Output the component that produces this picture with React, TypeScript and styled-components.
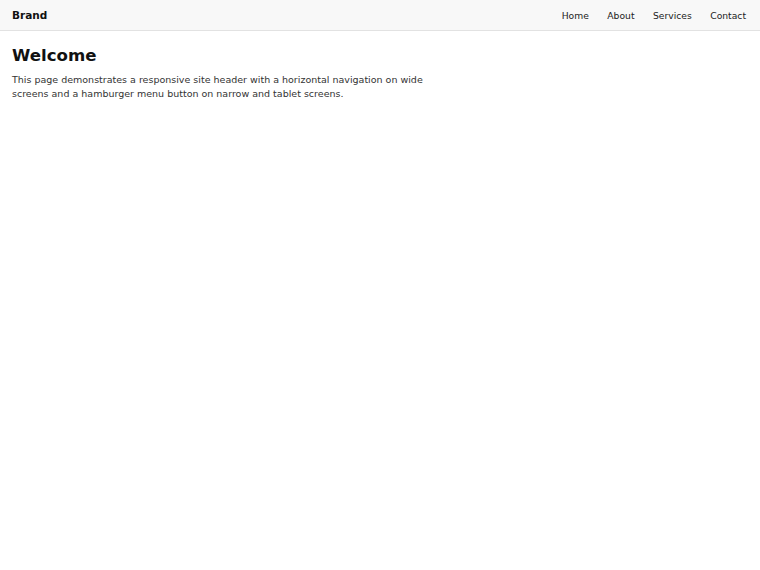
import React from "react";
import styled, { createGlobalStyle } from "styled-components";

const GlobalStyle = createGlobalStyle`
  html, body {
    margin: 0;
    padding: 0;
    background: #ffffff;
    font-family: "DejaVu Sans", sans-serif;
    color: #222222;
  }
`;

const Header = styled.header`
  display: flex;
  align-items: center;
  justify-content: space-between;
  height: 30px;
  padding: 0 14px 0 12px;
  background: #f8f8f8;
  border-bottom: 1px solid #e2e2e2;
`;

const Brand = styled.div`
  font-size: 10.5px;
  font-weight: bold;
  color: #111111;
`;

const Nav = styled.nav`
  display: flex;
  gap: 18.5px;
`;

const NavLink = styled.a`
  font-size: 9.2px;
  color: #222222;
  text-decoration: none;
`;

const Main = styled.main`
  padding: 15px 12px;
`;

const Title = styled.h1`
  margin: 0 0 8.4px;
  font-size: 16.6px;
  font-weight: bold;
  color: #111111;
`;

const Text = styled.p`
  margin: 0;
  max-width: 440px;
  font-size: 9.5px;
  line-height: 14.1px;
  color: #333333;
`;

const links = ["Home", "About", "Services", "Contact"];

export default function App() {
  return (
    <>
      <GlobalStyle />
      <Header>
        <Brand>Brand</Brand>
        <Nav>
          {links.map((link) => (
            <NavLink key={link} href="#">
              {link}
            </NavLink>
          ))}
        </Nav>
      </Header>
      <Main>
        <Title>Welcome</Title>
        <Text>
          This page demonstrates a responsive site header with a horizontal
          navigation on wide screens and a hamburger menu button on narrow and
          tablet screens.
        </Text>
      </Main>
    </>
  );
}
